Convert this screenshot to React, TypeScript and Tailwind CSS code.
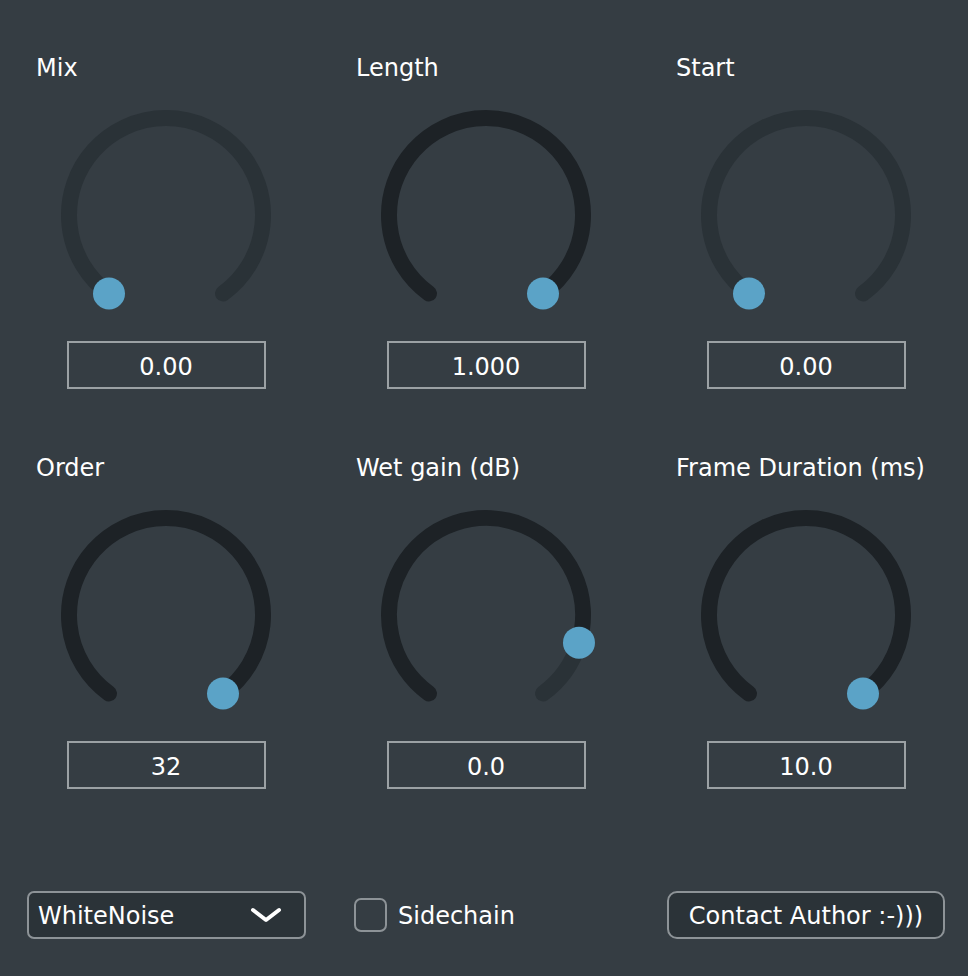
import React from "react";

const CX = 115;
const CY = 115;
const R = 97;
const START = -144;
const SWEEP = 288;

function pt(deg: number) {
  const a = (deg * Math.PI) / 180;
  return [CX + R * Math.sin(a), CY - R * Math.cos(a)];
}

function arc(from: number, to: number) {
  const [x1, y1] = pt(from);
  const [x2, y2] = pt(to);
  const large = to - from > 180 ? 1 : 0;
  return `M ${x1.toFixed(2)} ${y1.toFixed(2)} A ${R} ${R} 0 ${large} 1 ${x2.toFixed(2)} ${y2.toFixed(2)}`;
}

function Knob({ value }: { value: number }) {
  const end = START + SWEEP;
  const pos = START + SWEEP * value;
  const [dx, dy] = pt(pos);
  return (
    <svg width="230" height="230" viewBox="0 0 230 230" className="block">
      {value < 1 && (
        <path d={arc(pos, end)} fill="none" stroke="#2a3237" strokeWidth="16" strokeLinecap="round" />
      )}
      {value > 0 && (
        <path d={arc(START, pos)} fill="none" stroke="#1d2226" strokeWidth="16" strokeLinecap="round" />
      )}
      <circle cx={dx} cy={dy} r="16" fill="#5ba3c7" />
    </svg>
  );
}

function Cell({ label, value, display }: { label: string; value: number; display: string }) {
  return (
    <div className="flex flex-col">
      <div className="pl-[30px] pt-[1px] h-[32px] leading-[32px] text-[24px] text-white whitespace-nowrap">{label}</div>
      <div className="mt-[17px] self-center">
        <Knob value={value} />
      </div>
      <div className="mt-[11px] self-center w-[199px] h-[48px] pt-[3px] border-2 border-[#9ba1a4] flex items-center justify-center text-[24px] text-white">
        {display}
      </div>
    </div>
  );
}

export default function App() {
  return (
    <div
      className="w-[968px] h-[976px] bg-[#353d43] pt-[51px] overflow-hidden"
      style={{ fontFamily: '"DejaVu Sans", "Noto Sans", sans-serif' }}
    >
      <div className="ml-[6px] grid grid-cols-[320px_320px_320px] gap-y-[62px]">
        <Cell label="Mix" value={0} display="0.00" />
        <Cell label="Length" value={1} display="1.000" />
        <Cell label="Start" value={0} display="0.00" />
        <Cell label="Order" value={1} display="32" />
        <Cell label="Wet gain (dB)" value={0.87} display="0.0" />
        <Cell label="Frame Duration (ms)" value={1} display="10.0" />
      </div>
      <div className="mt-[102px] flex items-center h-[48px]">
        <div className="ml-[27px] w-[279px] h-[48px] rounded-[7px] border-2 border-[#8d9397] bg-[#2b3338] flex items-center justify-between pl-[9px] pr-[22px] text-[24px] text-white">
          <span className="pt-[2px]">WhiteNoise</span>
          <svg width="32" height="16" viewBox="0 0 32 16">
            <path d="M3 3 L16 13 L29 3" fill="none" stroke="#ffffff" strokeWidth="4" strokeLinecap="round" strokeLinejoin="round" />
          </svg>
        </div>
        <div className="ml-[48px] flex items-center">
          <div className="w-[33px] h-[34px] rounded-[7px] border-2 border-[#8d9397] bg-[#353d43]" />
          <span className="ml-[11px] pt-[2px] text-[24px] text-white">Sidechain</span>
        </div>
        <div className="ml-auto mr-[23px] w-[278px] h-[48px] pt-[2px] rounded-[10px] border-2 border-[#8d9397] bg-[#2b3338] flex items-center justify-center text-[24px] text-white whitespace-nowrap">
          Contact Author :-)))
        </div>
      </div>
    </div>
  );
}
